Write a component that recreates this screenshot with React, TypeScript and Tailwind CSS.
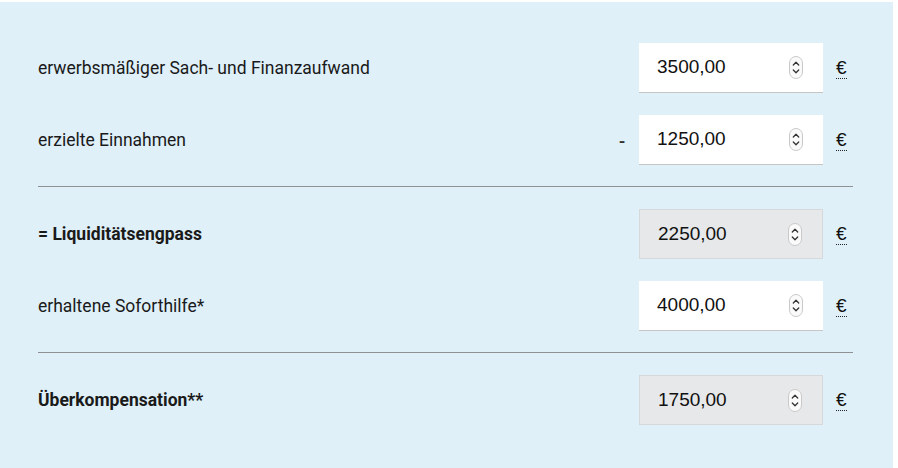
import React from "react";

type Row = {
  label: string;
  value: string;
  bold?: boolean;
  readOnly?: boolean;
  minus?: boolean;
};

const rowsA: Row[] = [
  { label: "erwerbsmäßiger Sach- und Finanzaufwand", value: "3500,00" },
  { label: "erzielte Einnahmen", value: "1250,00", minus: true },
];

const rowsB: Row[] = [
  { label: "= Liquiditätsengpass", value: "2250,00", bold: true, readOnly: true },
  { label: "erhaltene Soforthilfe*", value: "4000,00" },
];

const rowsC: Row[] = [
  { label: "Überkompensation**", value: "1750,00", bold: true, readOnly: true },
];

function Spinner() {
  return (
    <svg width="14" height="23" viewBox="0 0 14 23" className="shrink-0">
      <rect x="0.5" y="0.5" width="13" height="22" rx="6.5" fill="#fafafa" stroke="#c9c9c9" />
      <path d="M4.3 9 L7 6.3 L9.7 9" fill="none" stroke="#333" strokeWidth="1.3" strokeLinecap="round" strokeLinejoin="round" />
      <path d="M4.3 14 L7 16.7 L9.7 14" fill="none" stroke="#333" strokeWidth="1.3" strokeLinecap="round" strokeLinejoin="round" />
    </svg>
  );
}

function CalcRow({ row }: { row: Row }) {
  return (
    <div className="flex h-[72px] items-center">
      <div
        className={`flex-1 text-[17.5px] text-[#1a1a1a] ${row.bold ? "font-bold" : "font-normal"}`}
        style={{ fontFamily: "Roboto, 'Liberation Sans', sans-serif" }}
      >
        {row.label}
      </div>
      <div className="w-[30px] pr-[14px] text-right text-[19px] font-medium text-[#333]">
        {row.minus ? "-" : ""}
      </div>
      <div
        className={`flex h-[50px] w-[184px] items-center pl-[18px] pr-[20px] ${
          row.readOnly
            ? "bg-[#e7e8ea] border border-[#d6d8da]"
            : "bg-white border-b border-[#c6c6c6]"
        }`}
      >
        <span
          className="flex-1 text-[19px] text-[#111]"
          style={{ fontFamily: "'Liberation Sans', Arial, sans-serif" }}
        >
          {row.value}
        </span>
        <Spinner />
      </div>
      <div className="w-[30px] pl-[13px]">
        <span
          className="border-b border-dotted border-[#222] text-[19px] leading-[22px] text-[#111]"
          style={{ fontFamily: "'Liberation Sans', Arial, sans-serif" }}
        >
          €
        </span>
      </div>
    </div>
  );
}

export default function App() {
  return (
    <div className="h-[468px] w-[898px] bg-white pt-[2px]">
      <div className="h-[466px] w-[893px] bg-[#dff0f8] pl-[38px] pr-[40px] pt-[30px]">
        {rowsA.map((r) => (
          <CalcRow key={r.label} row={r} />
        ))}
        <div className="mb-[11px] mt-[10px] h-px bg-[#8f9294]" />
        {rowsB.map((r) => (
          <CalcRow key={r.label} row={r} />
        ))}
        <div className="mb-[11px] mt-[10px] h-px bg-[#8f9294]" />
        {rowsC.map((r) => (
          <CalcRow key={r.label} row={r} />
        ))}
      </div>
    </div>
  );
}
